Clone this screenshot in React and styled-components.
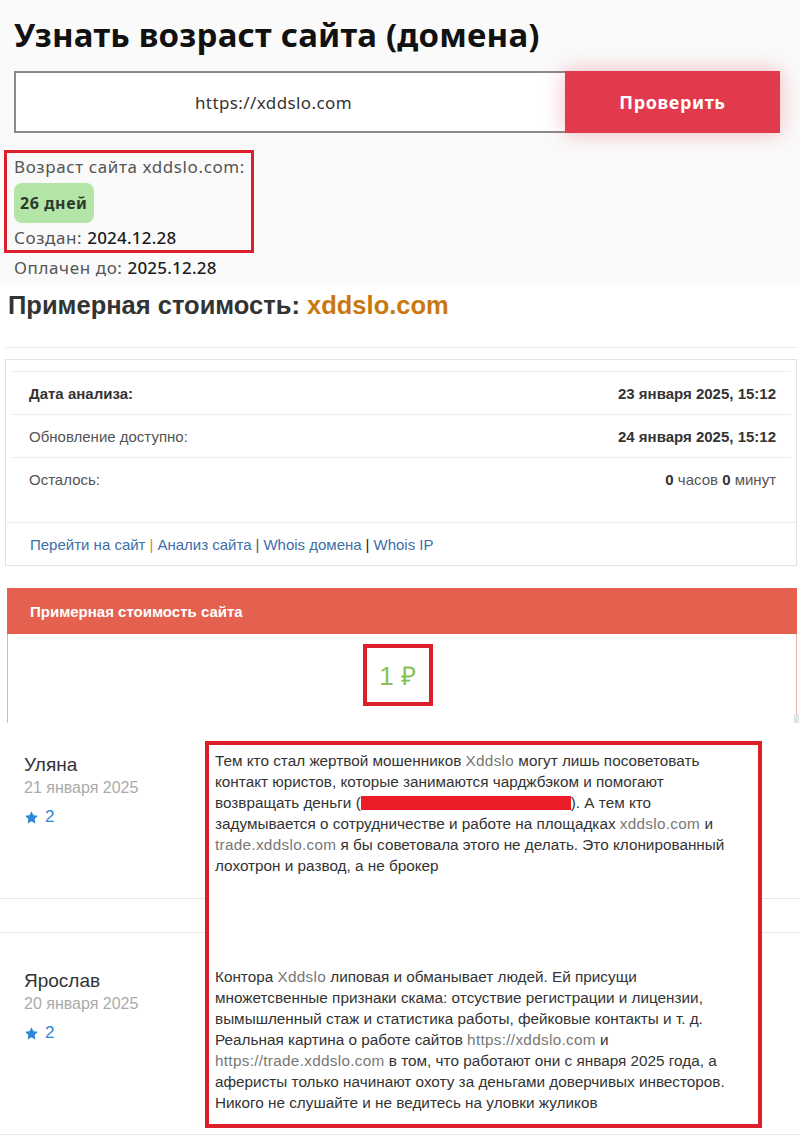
import React from "react"
import styled, { createGlobalStyle } from "styled-components"

const GlobalStyle = createGlobalStyle`
  body {
    margin: 0;
    background: #ffffff;
  }
`

const RED = "#dc1f2b"

const reviews = [
  {
    name: "Уляна",
    date: "21 января 2025",
    rating: 2,
    height: 176,
    pad: 30,
    top: false,
  },
  {
    name: "Ярослав",
    date: "20 января 2025",
    rating: 2,
    height: 203,
    pad: 36,
    top: true,
  },
]

function StarIcon() {
  return (
    <svg width="15" height="15" viewBox="0 0 24 24">
      <path
        d="M12 1.8l3.1 6.6 7.1.9-5.2 5 1.3 7.1L12 18l-6.3 3.4L7 14.3l-5.2-5 7.1-.9z"
        fill="#2d86d6"
      />
    </svg>
  )
}

function App() {
  return (
    <Page>
      <GlobalStyle />
      <TopSection>
        <Title>Узнать возраст сайта (домена)</Title>
        <SearchRow>
          <UrlInput>https://xddslo.com</UrlInput>
          <CheckButton>Проверить</CheckButton>
        </SearchRow>
        <AgeFrame>
          <InfoLine>Возраст сайта xddslo.com:</InfoLine>
          <AgeBadge>26 дней</AgeBadge>
          <InfoLine gap={4}>
            Создан: <strong>2024.12.28</strong>
          </InfoLine>
        </AgeFrame>
        <InfoLine gap={4}>
          Оплачен до: <strong>2025.12.28</strong>
        </InfoLine>
      </TopSection>

      <CostSection>
        <CostTitle>
          Примерная стоимость: <Domain>xddslo.com</Domain>
        </CostTitle>
        <Rule />
        <Card>
          <InfoTable>
            <TableRow>
              <Label bold>Дата анализа:</Label>
              <Value>
                <b>23 января 2025, 15:12</b>
              </Value>
            </TableRow>
            <TableRow>
              <Label>Обновление доступно:</Label>
              <Value>
                <b>24 января 2025, 15:12</b>
              </Value>
            </TableRow>
            <TableRow>
              <Label>Осталось:</Label>
              <Value>
                <b>0</b> часов <b>0</b> минут
              </Value>
            </TableRow>
          </InfoTable>
          <CardFooter>
            <Link>Перейти на сайт</Link>
            <Sep color="#d08a2a">|</Sep>
            <Link>Анализ сайта</Link>
            <Sep>|</Sep>
            <Link>Whois домена</Link>
            <Sep color="#222">|</Sep>
            <Link>Whois IP</Link>
          </CardFooter>
        </Card>

        <Panel>
          <PanelHead>Примерная стоимость сайта</PanelHead>
          <PanelBody>
            <PriceFrame>1 ₽</PriceFrame>
          </PanelBody>
          <ScrollNub />
        </Panel>
      </CostSection>

      <ReviewList>
        {reviews.map((r) => (
          <ReviewRow key={r.name} h={r.height} pad={r.pad} top={r.top}>
            <Author>{r.name}</Author>
            <ReviewDate>{r.date}</ReviewDate>
            <Rating>
              <StarIcon />
              {r.rating}
            </Rating>
          </ReviewRow>
        ))}

        <ReviewFrame>
          <ReviewText>
            Тем кто стал жертвой мошенников <Muted>Xddslo</Muted> могут лишь посоветовать
            <br />
            контакт юристов, которые занимаются чарджбэком и помогают
            <br />
            возвращать деньги (<Redacted />). А тем кто
            <br />
            задумывается о сотрудничестве и работе на площадках <Muted>xddslo.com</Muted> и
            <br />
            <Muted>trade.xddslo.com</Muted> я бы советовала этого не делать. Это клонированный
            <br />
            лохотрон и развод, а не брокер
          </ReviewText>
          <ReviewText gap={90}>
            Контора <Muted>Xddslo</Muted> липовая и обманывает людей. Ей присущи
            <br />
            множетсвенные признаки скама: отсуствие регистрации и лицензии,
            <br />
            вымышленный стаж и статистика работы, фейковые контакты и т. д.
            <br />
            Реальная картина о работе сайтов <Muted>https://xddslo.com</Muted> и
            <br />
            <Muted>https://trade.xddslo.com</Muted> в том, что работают они с января 2025 года, а
            <br />
            аферисты только начинают охоту за деньгами доверчивых инвесторов.
            <br />
            Никого не слушайте и не ведитесь на уловки жуликов
          </ReviewText>
        </ReviewFrame>
      </ReviewList>
    </Page>
  )
}

export default App

const Page = styled.div`
  width: 800px;
  background: #fff;
`

const TopSection = styled.div`
  background: #fafafa;
  padding: 17px 20px 6px 14px;
  font-family: "Noto Sans", "Open Sans", sans-serif;
`

const Title = styled.h1`
  margin: 0;
  font-size: 33px;
  line-height: 36px;
  font-weight: 700;
  color: #111;
  letter-spacing: 0.2px;
`

const SearchRow = styled.div`
  display: flex;
  margin-top: 18px;
  height: 62px;
  width: 766px;
`

const UrlInput = styled.div`
  box-sizing: border-box;
  width: 551px;
  border: 2px solid #8a8a8a;
  border-right: none;
  background: #fff;
  display: flex;
  align-items: center;
  justify-content: center;
  padding-right: 34px;
  font-size: 17px;
  letter-spacing: 0.4px;
  color: #333;
`

const CheckButton = styled.div`
  flex: 1;
  background: #e03a4c;
  color: #fff;
  font-weight: 700;
  font-size: 18px;
  letter-spacing: 0.6px;
  display: flex;
  align-items: center;
  justify-content: center;
  box-shadow: 0 0 22px rgba(224, 58, 76, 0.35);
`

const AgeFrame = styled.div`
  margin: 17px 0 0 -10px;
  width: 250px;
  box-sizing: border-box;
  border: 3px solid ${RED};
  padding: 3px 0 1px 7px;
`

const InfoLine = styled.div`
  margin-top: ${(p) => p.gap || 0}px;
  font-size: 17px;
  line-height: 22px;
  letter-spacing: 0.6px;
  color: #555;
  white-space: nowrap;
  strong {
    color: #1c1c1c;
    font-weight: 500;
    letter-spacing: 0.2px;
  }
`

const AgeBadge = styled.div`
  display: inline-flex;
  align-items: center;
  margin-top: 5px;
  height: 40px;
  padding: 0 7px 0 6px;
  border-radius: 8px;
  background: #b3e6a6;
  font-size: 16px;
  letter-spacing: 0.6px;
  font-weight: 700;
  color: #2d3a2b;
`

const CostSection = styled.div`
  padding: 6px 3px 0 5px;
  font-family: "Liberation Sans", Arial, sans-serif;
`

const CostTitle = styled.h2`
  margin: 0 0 0 3px;
  font-size: 25.5px;
  line-height: 28px;
  font-weight: 700;
  color: #333;
`

const Domain = styled.span`
  color: #c8780f;
`

const Rule = styled.div`
  margin-top: 28px;
  height: 1px;
  background: #ececec;
`

const Card = styled.div`
  margin-top: 11px;
  border: 1px solid #e2e2e2;
`

const InfoTable = styled.div`
  margin: 11px 5px 22px 6px;
`

const TableRow = styled.div`
  display: flex;
  justify-content: space-between;
  align-items: center;
  height: 43px;
  box-sizing: border-box;
  border-top: 1px solid #ededed;
  padding: 0 15px 0 17px;
  font-size: 15px;
  color: #444;
`

const Label = styled.span`
  font-weight: ${(p) => (p.bold ? 700 : 400)};
  color: ${(p) => (p.bold ? "#333" : "#555")};
`

const Value = styled.span`
  color: #555;
  b {
    color: #333;
  }
`

const CardFooter = styled.div`
  border-top: 1px solid #ededed;
  height: 42px;
  display: flex;
  align-items: center;
  padding-left: 24px;
  font-size: 15px;
`

const Link = styled.span`
  color: #3e6ea6;
`

const Sep = styled.span`
  color: ${(p) => p.color || "#555"};
  margin: 0 4px;
`

const Panel = styled.div`
  position: relative;
  margin: 22px 0 0 2px;
`

const PanelHead = styled.div`
  height: 46px;
  background: #e4604f;
  color: #fff;
  font-weight: 700;
  font-size: 15px;
  display: flex;
  align-items: center;
  padding-left: 23px;
`

const PanelBody = styled.div`
  height: 89px;
  box-sizing: border-box;
  border-left: 1px solid #e8b0a8;
  border-right: 1px solid #e8b0a8;
  display: flex;
  justify-content: center;
  padding-top: 10px;
`

const PriceFrame = styled.div`
  box-sizing: border-box;
  width: 70px;
  height: 62px;
  margin-left: -9px;
  border: 4px solid ${RED};
  display: flex;
  align-items: center;
  justify-content: center;
  color: #8cc152;
  font-size: 26px;
`

const ScrollNub = styled.div`
  position: absolute;
  right: -2px;
  bottom: 0;
  width: 5px;
  height: 9px;
  background: #e4e4e4;
`

const ReviewList = styled.div`
  position: relative;
  font-family: "Liberation Sans", Arial, sans-serif;
  padding-bottom: 8px;
`

const ReviewRow = styled.div`
  box-sizing: border-box;
  height: ${(p) => p.h}px;
  margin-top: ${(p) => (p.top ? 33 : 0)}px;
  border-top: ${(p) => (p.top ? "1px solid #e6e6e6" : "none")};
  border-bottom: 1px solid #e6e6e6;
  padding: ${(p) => p.pad}px 0 0 24px;
`

const Author = styled.div`
  font-size: 19px;
  line-height: 24px;
  color: #333;
`

const ReviewDate = styled.div`
  font-size: 16px;
  line-height: 22px;
  color: #aaa;
`

const Rating = styled.div`
  margin-top: 7px;
  display: flex;
  align-items: center;
  gap: 6px;
  font-size: 17px;
  line-height: 22px;
  color: #2d86d6;
`

const ReviewFrame = styled.div`
  position: absolute;
  top: 18px;
  left: 205px;
  width: 557px;
  height: 387px;
  box-sizing: border-box;
  border: 4px solid ${RED};
  background: #fff;
  padding: 5px 0 0 6px;
`

const ReviewText = styled.p`
  margin: ${(p) => p.gap || 0}px 0 0;
  font-size: 15.3px;
  line-height: 21px;
  color: #333;
  white-space: nowrap;
`

const Muted = styled.span`
  color: #777;
  letter-spacing: 0.3px;
`

const Redacted = styled.span`
  display: inline-block;
  width: 210px;
  height: 14px;
  vertical-align: -2px;
  background: #ea1d28;
`
